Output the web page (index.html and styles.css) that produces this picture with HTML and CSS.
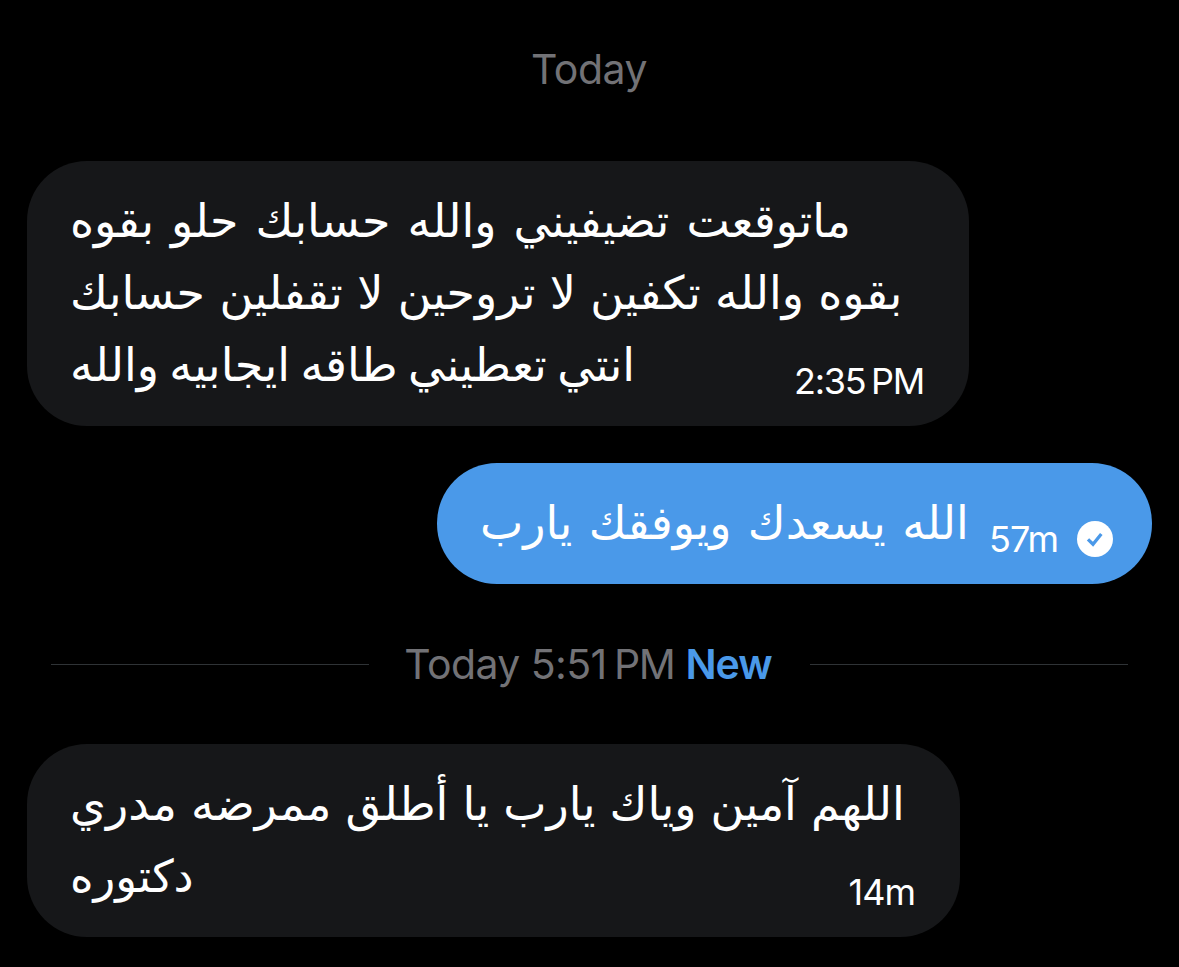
FILE: index.html
```html
<!DOCTYPE html>
<html lang="ar">
<head>
    <meta charset="UTF-8">
    <meta name="viewport" content="width=device-width, initial-scale=1.0">
    <title>Messages</title>
    <link rel="stylesheet" href="styles.css">
</head>
<body>
    <main class="chat">
        <div class="day">Today</div>

        <div class="bubble received first">
            <div class="text" dir="rtl">
                <div class="line l1">ماتوقعت تضيفيني والله حسابك حلو بقوه</div>
                <div class="line l2">بقوه والله تكفين لا تروحين لا تقفلين حسابك</div>
                <div class="line l3">انتي تعطيني طاقه ايجابيه والله</div>
            </div>
            <div class="meta"><span class="time clock">2:35 PM</span></div>
        </div>

        <div class="bubble sent">
            <div class="text" dir="rtl">
                <div class="line l4">الله يسعدك ويوفقك يارب</div>
            </div>
            <div class="meta">
                <span class="time">57m</span>
                <svg class="check" viewBox="0 0 36 36">
                    <circle cx="18" cy="18" r="18" fill="#fff"/>
                    <path d="M11 18.4l5 4.9 8.3-10.3" fill="none" stroke="#4a99e9" stroke-width="3.3"/>
                </svg>
            </div>
        </div>

        <div class="divider">
            <span class="rule"></span>
            <span class="label">Today 5:51<span class="pm"> PM</span> <b>New</b></span>
            <span class="rule"></span>
        </div>

        <div class="bubble received last">
            <div class="text" dir="rtl">
                <div class="line l5">اللهم آمين وياك يارب يا أطلق ممرضه مدري</div>
                <div class="line l6">دكتوره</div>
            </div>
            <div class="meta"><span class="time">14m</span></div>
        </div>
    </main>
</body>
</html>
```

FILE: styles.css
```css
:root {
    --gray: #727276;
    --blue: #4a99e9;
    --dark: #161719;
}
* {
    box-sizing: border-box;
}
body {
    margin: 0;
    background: #000;
    color: #fff;
    font-family: Inter, 'Liberation Sans', sans-serif;
}
.chat {
    height: 967px;
    padding: 0 27px;
    display: flex;
    flex-direction: column;
    align-items: flex-start;
    overflow: hidden;
}
.day {
    align-self: center;
    height: 161px;
    padding-top: 44px;
    padding-right: 1px;
    font-size: 41px;
    line-height: 50px;
    letter-spacing: -0.5px;
    color: var(--gray);
}
/* text and time share one cell, long lines run above the time */
.bubble {
    display: grid;
    padding: 24px 43px 25px;
    border-radius: 60px;
}
.text,
.meta {
    grid-area: 1 / 1;
}
.received {
    background: var(--dark);
}
.first {
    width: 942px;
    height: 265px;
    padding-right: 45px;
}
.last {
    width: 933px;
    height: 193px;
    padding-right: 45px;
}
.sent {
    align-self: flex-end;
    width: 715px;
    height: 121px;
    margin-top: 37px;
    padding-right: 39px;
    background: var(--blue);
}
.text {
    font-family: 'DejaVu Sans', sans-serif;
    font-size: 46px;
    text-align: left;
}
.line {
    height: 72px;
    line-height: 73px;
    white-space: nowrap;
}
.l1 {
    word-spacing: 2.4px;
}
.l2 {
    word-spacing: -0.3px;
}
.l3 {
    word-spacing: -4.2px;
}
.l4 {
    word-spacing: 1.7px;
}
.l5 {
    word-spacing: -0.6px;
}
.l6 {
    font-size: 45px;
}
.meta {
    align-self: end;
    justify-self: end;
    display: flex;
    align-items: center;
    gap: 19px;
    height: 40px;
}
.time {
    font-size: 36px;
    line-height: 40px;
    letter-spacing: -1px;
}
.clock {
    letter-spacing: -1.3px;
    word-spacing: -3px;
}
.check {
    width: 36px;
    height: 36px;
}
.divider {
    width: 1077px;
    height: 160px;
    margin-left: 24px;
    display: flex;
    align-items: center;
    justify-content: space-between;
}
.rule {
    width: 318px;
    height: 1px;
    background: #2f3336;
}
.label {
    padding-right: 3px;
    font-size: 41px;
    letter-spacing: -0.6px;
    color: var(--gray);
    white-space: nowrap;
}
.pm {
    word-spacing: -3px;
    letter-spacing: -1.3px;
}
.label b {
    font-weight: 600;
    letter-spacing: -1px;
    color: var(--blue);
}
```
